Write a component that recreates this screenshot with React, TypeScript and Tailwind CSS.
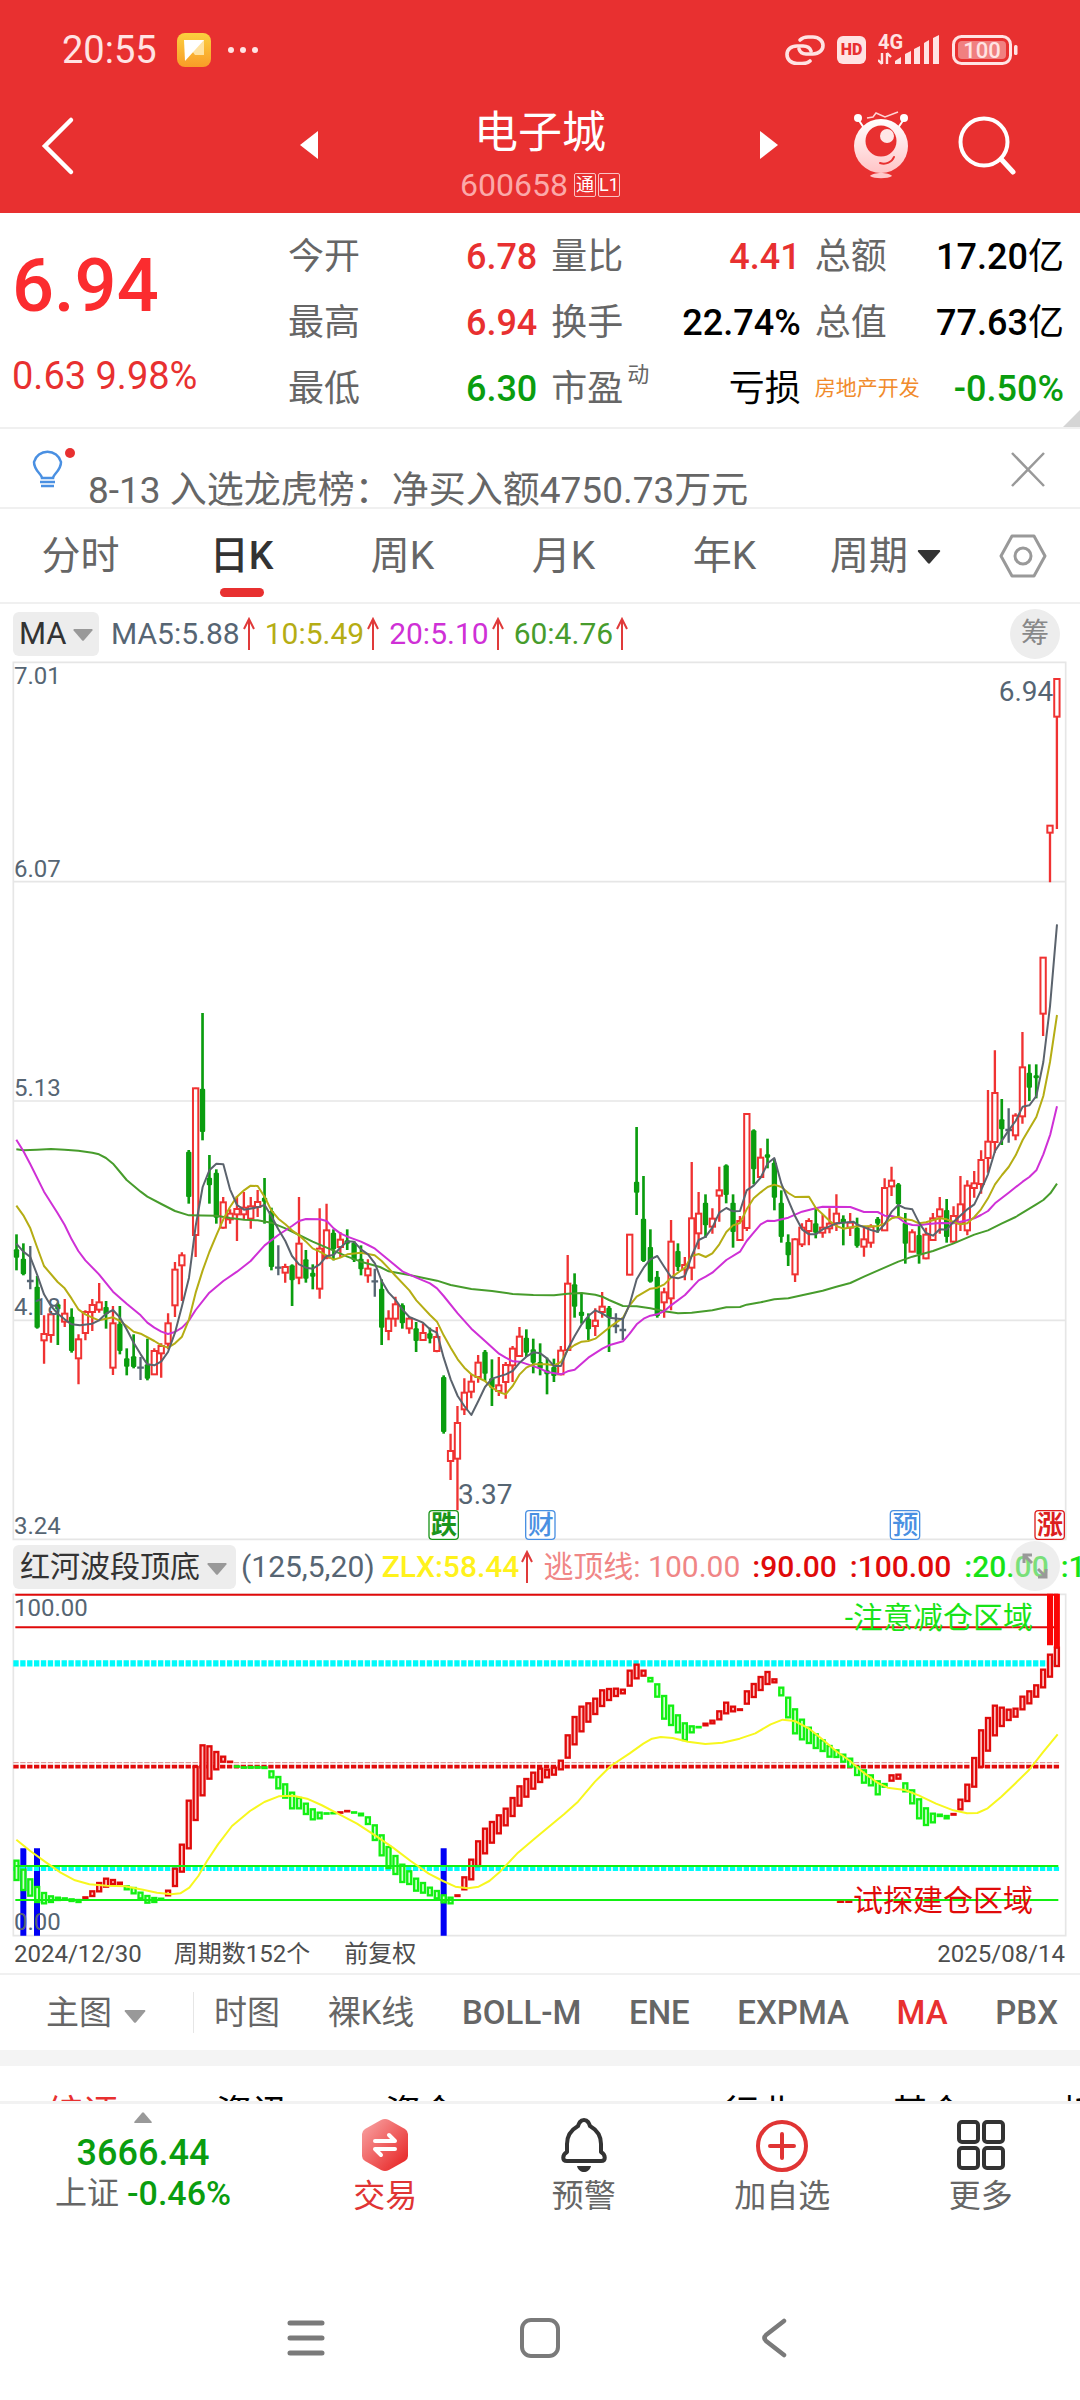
import React from "react";

type Candle = [string, number, number, number, number];
type Bar = [string, number, number];

/* Chart space: 3 units per pixel, one session every 20.67 units. */
const FIRST = 49.5;
const STEP = 20.67;
const xAt = (i: number) => FIRST + STEP * i;

const UP = "#f03232";
const DOWN = "#0a9d0f";
const FLAT = "#566573";

/* kind, high, body top, body bottom, low */
const CANDLES: Candle[] = `
G1720,1765,1790,1828 G1747,1793,1840,1843 N1755,1860,1860,1885 G1845,1877,2000,2003 R1963,2019,2038,2108
R1950,1960,2022,2045 G1925,1930,1945,2052 R1914,1958,1982,1998 G1942,1967,2070,2075 R2020,2035,2092,2170
R1948,1953,2016,2038 R1914,1932,1953,2010 R1866,1924,1946,1955 G1920,1938,1960,2003 R1935,1987,2120,2142
G1935,1988,2070,2080 G2062,2092,2117,2143 G2020,2086,2118,2122 N2088,2120,2120,2157 G2033,2110,2153,2158
R2062,2070,2140,2142 R2047,2055,2077,2150 R1957,1987,2048,2065 R1803,1826,1933,1968 R1774,1783,1813,1920
G1467,1472,1608,1628 R1280,1282,1722,1788 G1056,1283,1413,1438 G1482,1550,1573,1628 G1525,1535,1670,1688
R1608,1624,1700,1703 R1645,1658,1675,1688 R1605,1644,1660,1740 R1593,1640,1660,1675 R1608,1636,1673,1703
R1587,1623,1638,1668 G1551,1610,1622,1688 G1640,1650,1818,1828 N1753,1820,1820,1843 R1808,1818,1835,1865
G1810,1813,1858,1935 R1608,1748,1850,1870 G1767,1795,1853,1865 G1810,1835,1847,1885 R1642,1763,1883,1913
R1628,1708,1790,1795 G1705,1715,1765,1798 R1713,1736,1758,1790 G1705,1738,1748,1767 G1740,1745,1797,1803
G1753,1793,1825,1843 R1795,1823,1843,1865 N1823,1861,1861,1907 G1855,1883,2000,2052 R1948,1973,2010,2038
R1907,1930,1973,1997 G1927,1932,1987,2003 R1968,1973,2002,2018 G1983,2002,2040,2073 R1987,2016,2037,2040
G2000,2017,2033,2047 R1998,2028,2070,2074 G2143,2148,2313,2318 R2318,2370,2400,2457 R2235,2286,2393,2548
R2152,2195,2245,2262 R2138,2162,2192,2212 R2082,2105,2148,2165 G2067,2072,2138,2160 G2095,2152,2180,2235
R2088,2173,2190,2205 R2103,2112,2163,2213 R2055,2063,2113,2163 R1998,2027,2085,2088 G2005,2030,2075,2088
G2033,2065,2105,2137 G2047,2103,2123,2143 G2090,2128,2140,2200 G2093,2118,2145,2163 R2055,2069,2140,2143
R1782,1868,2067,2070 G1837,1870,1937,1970 G1895,1952,1965,1988 G1957,1973,2005,2037 R1942,1979,1995,2025
R1893,1937,1953,1970 G1935,1940,1970,2073 N1957,1995,1995,2017 N1970,2007,2007,2037 R1720,1721,1841,1843
G1398,1562,1595,1662 G1545,1673,1800,1803 G1705,1758,1862,1865 G1830,1847,1965,1970 R1880,1894,1924,1970
R1677,1742,1912,1948 G1747,1770,1818,1830 R1788,1812,1825,1858 R1503,1672,1820,1858 R1593,1658,1717,1765
G1600,1625,1693,1730 R1642,1673,1697,1718 R1517,1588,1604,1682 G1510,1513,1602,1627 G1600,1625,1713,1760
R1665,1680,1737,1740 R1358,1359,1701,1710 G1405,1408,1525,1570 R1462,1490,1548,1550 G1433,1480,1490,1522
G1495,1505,1610,1648 G1588,1625,1728,1745 G1720,1743,1783,1815 R1732,1735,1840,1863 R1687,1700,1750,1758
R1672,1680,1710,1753 G1643,1687,1715,1732 R1660,1700,1715,1730 R1642,1688,1702,1717 R1600,1658,1687,1710
G1663,1673,1687,1753 R1656,1685,1700,1725 G1670,1700,1755,1760 R1700,1735,1757,1787 R1690,1697,1745,1760
G1668,1673,1688,1715 R1552,1581,1708,1710 R1517,1559,1576,1605 G1566,1570,1630,1665 G1656,1686,1748,1808
R1705,1714,1772,1774 G1695,1722,1780,1808 R1700,1721,1792,1795 R1656,1672,1737,1740 R1608,1645,1667,1718
G1614,1647,1728,1745 R1636,1665,1742,1745 R1545,1630,1687,1710 R1558,1574,1708,1723 R1530,1567,1581,1610
R1468,1497,1569,1598 R1287,1442,1491,1535 R1168,1296,1443,1475 G1314,1375,1405,1452 N1342,1407,1407,1445
R1357,1364,1423,1438 R1113,1219,1366,1388 G1210,1235,1280,1320 G1210,1243,1252,1312 R889,890,1058,1125
R493,494,515,664 R53,54,167,504`
  .trim()
  .split(/\s+/)
  .map((s) => [s[0], ...s.slice(1).split(",").map(Number)] as Candle);

const MA5 =
  "49,1748 70,1772 91,1788 111,1840 132,1900 153,1935 173,1958 194,1975 215,1990 240,1993 277,1988 297,1978 318,1958 339,1947 360,1970 380,2005 401,2045 422,2080 442,2110 463,2113 484,2101 504,2073 525,2015 546,1935 567,1850 587,1695 608,1578 628,1528 649,1508 670,1510 690,1585 711,1632 732,1646 773,1639 794,1632 814,1665 835,1705 856,1740 876,1785 897,1810 918,1820 938,1823 959,1810 980,1785 1001,1782 1021,1760 1042,1741 1062,1742 1083,1765 1104,1780 1125,1808 1145,1860 1166,1895 1187,1917 1207,1945 1228,1968 1269,1985 1290,2005 1311,2015 1331,2090 1352,2155 1373,2205 1393,2235 1414,2262 1435,2220 1455,2178 1476,2153 1517,2140 1538,2130 1559,2105 1579,2087 1600,2074 1621,2077 1641,2092 1662,2115 1683,2115 1703,2065 1724,2025 1745,1990 1765,1965 1786,1948 1807,1958 1827,1970 1869,1975 1889,1930 1910,1855 1931,1820 1951,1795 1972,1785 1993,1818 2013,1848 2034,1852 2055,1845 2075,1785 2096,1737 2117,1727 2137,1700 2158,1655 2179,1641 2199,1651 2220,1650 2240,1588 2261,1574 2282,1550 2303,1507 2323,1491 2344,1568 2365,1618 2385,1665 2406,1705 2427,1720 2447,1720 2468,1705 2509,1687 2530,1685 2560,1682 2571,1690 2613,1707 2633,1712 2654,1690 2675,1652 2695,1632 2716,1642 2737,1645 2757,1685 2778,1716 2799,1724 2819,1705 2840,1706 2861,1682 2902,1645 2923,1630 2943,1588 2964,1540 2985,1470 3006,1438 3026,1408 3047,1380 3068,1337 3088,1333 3109,1305 3130,1203 3150,1036 3171,790";
const MA10 =
  "49,1634 70,1663 91,1702 111,1758 132,1815 173,1863 194,1882 215,1913 235,1945 256,1960 277,1970 297,1978 339,1969 360,1980 380,1995 401,2012 422,2018 463,2040 484,2053 504,2060 525,2047 546,2027 567,1975 587,1895 608,1828 628,1773 649,1723 670,1675 690,1638 711,1607 732,1588 752,1574 773,1575 794,1608 814,1648 835,1673 856,1690 876,1708 897,1723 918,1742 938,1762 959,1772 1001,1796 1021,1790 1042,1780 1083,1775 1124,1783 1145,1800 1166,1822 1187,1845 1228,1888 1249,1918 1290,1962 1311,1982 1331,2023 1352,2060 1373,2095 1393,2120 1414,2140 1455,2160 1476,2180 1497,2193 1517,2200 1538,2175 1559,2140 1579,2120 1600,2110 1641,2110 1662,2113 1683,2103 1703,2067 1724,2052 1745,2042 1765,2040 1786,2033 1827,2000 1869,1970 1889,1933 1910,1907 1951,1883 1972,1880 1993,1870 2013,1850 2055,1820 2075,1785 2096,1779 2117,1788 2137,1777 2158,1750 2179,1713 2199,1693 2220,1686 2240,1645 2261,1612 2282,1594 2303,1578 2323,1571 2344,1578 2365,1596 2385,1608 2427,1607 2447,1640 2468,1660 2489,1680 2509,1695 2530,1703 2571,1696 2633,1696 2654,1687 2675,1672 2695,1667 2716,1675 2737,1678 2757,1687 2778,1684 2819,1672 2840,1675 2861,1683 2881,1690 2902,1687 2923,1668 2943,1645 2964,1612 2985,1570 3006,1542 3026,1518 3047,1483 3068,1437 3088,1403 3109,1368 3130,1305 3150,1203 3171,1062";
const MA20 =
  "49,1436 70,1470 91,1510 132,1592 173,1657 194,1692 215,1735 235,1770 256,1798 297,1840 339,1892 380,1928 422,1963 442,1985 463,2000 484,2012 504,2019 525,2013 546,2000 567,1978 587,1947 628,1895 670,1860 711,1832 752,1800 794,1753 835,1722 876,1695 897,1680 918,1674 960,1675 980,1680 1001,1702 1021,1717 1042,1727 1083,1742 1104,1752 1125,1763 1166,1797 1207,1831 1249,1850 1290,1867 1311,1882 1331,1905 1373,1957 1414,2003 1455,2040 1497,2078 1517,2090 1538,2101 1559,2102 1621,2123 1641,2133 1683,2140 1703,2131 1724,2126 1765,2090 1807,2063 1827,2053 1869,2041 1889,2018 1910,1990 1931,1973 1951,1964 1972,1960 1993,1950 2013,1933 2055,1902 2096,1858 2117,1847 2137,1835 2179,1797 2220,1772 2240,1740 2261,1715 2282,1690 2303,1679 2323,1680 2365,1670 2406,1652 2447,1642 2468,1637 2551,1638 2592,1653 2633,1653 2654,1664 2675,1665 2695,1670 2716,1686 2737,1692 2757,1693 2778,1690 2819,1686 2861,1687 2902,1678 2923,1672 2943,1662 2964,1650 2985,1627 3026,1595 3068,1562 3088,1548 3109,1528 3130,1480 3151,1420 3171,1336";
const MA60 =
  "49,1465 70,1468 111,1466 153,1464 194,1466 235,1469 277,1475 297,1480 318,1491 339,1508 360,1533 380,1557 422,1592 442,1607 484,1629 525,1650 567,1663 649,1664 690,1671 732,1676 773,1678 814,1685 856,1702 897,1722 938,1742 980,1760 1042,1787 1083,1802 1140,1818 1166,1831 1228,1842 1311,1859 1352,1872 1414,1884 1476,1890 1538,1899 1600,1902 1662,1903 1703,1898 1745,1896 1786,1901 1807,1907 1827,1917 1869,1935 1910,1936 1951,1942 1993,1951 2034,1957 2075,1955 2137,1948 2179,1939 2220,1938 2240,1931 2282,1924 2323,1915 2365,1912 2406,1903 2468,1889 2509,1877 2551,1866 2592,1847 2633,1829 2695,1802 2737,1787 2799,1770 2861,1747 2923,1721 2964,1708 3006,1687 3047,1668 3109,1630 3130,1617 3151,1597 3171,1568";

const BARS: Bar[] = `
G1076,1140 G1103,1170 G1132,1187 G1155,1206 G1173,1210 G1183,1206 G1187,1200 G1189,1194 G1192,1203 G1194,1206
R1186,1195 R1168,1188 R1143,1174 R1130,1160 R1134,1152 R1142,1152 G1153,1168 G1158,1180 G1172,1195 G1182,1208
G1188,1206 G1190,1198 R1166,1186 R1100,1158 R1028,1115 R896,1045 R795,960 R730,886 R733,836 R750,808
R764,785 R779,786 G793,796 G796,802 G795,803 G795,803 G796,804 G808,832 G825,865 G847,893
G872,925 G888,925 G905,942 G922,958 G932,955 G934,938 G933,936 R931,936 R927,934 G931,935
G935,946 G946,972 G970,1020 G1000,1066 G1035,1104 G1062,1122 G1088,1146 G1108,1152 G1130,1172 G1143,1178
G1157,1186 G1167,1195 G1180,1207 G1187,1210 R1180,1188 R1126,1168 R1073,1138 R1018,1098 R980,1060 R960,1028
R940,1000 R920,976 R888,948 R853,917 R831,890 R812,866 R800,846 R803,832 R797,824 R776,808
R700,773 R645,733 R614,694 R604,665 R590,642 R565,618 R561,600 R560,588 R563,580 R506,557
R488,535 R506,527 G528,544 G547,590 G582,656 G611,675 G640,697 G664,720 G673,697 G675,679
R665,676 R656,670 R628,658 R602,640 R614,634 R622,630 R568,611 R546,591 R525,570 R510,552
R532,547 G557,586 G587,652 G622,700 G653,718 G677,729 G697,744 G715,753 G732,770 G745,771
G758,785 G770,800 G795,825 G805,848 G820,856 G838,883 G846,860 R820,842 R818,836 G844,874
G865,910 G892,955 G919,975 G935,967 G938,948 G942,955 R936,944 R893,928 R848,903 R768,860
R685,800 R648,752 R611,706 R617,678 R623,660 R620,650 R584,628 R568,610 R550,590 R503,562
R458,530 R437,498`
  .trim()
  .split(/\s+/)
  .map((s) => [s[0], ...s.slice(1).split(",").map(Number)] as Bar);

const ZLX =
  "49,1016 91,1050 139,1085 182,1115 225,1138 268,1150 321,1154 375,1156 429,1166 471,1175 514,1180 541,1177 568,1160 595,1125 621,1080 654,1030 696,975 750,930 793,903 836,886 879,884 921,893 964,912 1018,940 1071,968 1125,1003 1179,1040 1232,1080 1286,1118 1329,1140 1366,1157 1404,1162 1436,1157 1468,1140 1500,1112 1554,1055 1607,1010 1692,940 1734,902 1785,842 1832,795 1889,757 1930,728 1956,713 1982,708 2018,711 2064,722 2116,729 2167,725 2219,713 2266,697 2312,670 2348,656 2384,660 2426,682 2467,715 2508,750 2550,780 2591,815 2632,845 2663,860 2715,867 2756,883 2808,908 2860,928 2901,937 2932,936 2963,922 3004,887 3045,848 3087,807 3128,755 3173,700";

function Caret({ className = "" }: { className?: string }) {
  return (
    <svg viewBox="0 0 20 12" className={`pointer-events-none shrink-0 ${className}`} fill="currentColor" aria-hidden="true">
      <path d="M1 0h18q1 .6 .4 1.4L11 11.2q-1 1-2 0L.6 1.4Q0 .6 1 0z" />
    </svg>
  );
}

function UpArrow() {
  return (
    <svg viewBox="0 0 12 34" className="h-[34px] w-3 shrink-0" fill="none" stroke="#e03a3a" strokeWidth="2" aria-hidden="true">
      <path d="M6 33V2M1 12L6 2l5 10" />
    </svg>
  );
}

function Pick({ label, value, className = "" }: { label: string; value: string; className?: string }) {
  return (
    <select aria-label={label} className={`appearance-none bg-transparent outline-none ${className}`}>
      <option>{value}</option>
    </select>
  );
}

function StatusBar() {
  return (
    <div className="flex h-[100px] items-center justify-between pl-[62px] pr-[62px] text-[#ffe3e3]">
      <div className="flex items-center">
        <span className="text-[38px] leading-[44px]">20:55</span>
        <svg viewBox="0 0 34 34" className="ml-[20px] h-[34px] w-[34px]" aria-hidden="true">
          <defs>
            <linearGradient id="note" x1="0" y1="0" x2="0" y2="1">
              <stop offset="0" stopColor="#fbd03f" />
              <stop offset="1" stopColor="#f99c28" />
            </linearGradient>
          </defs>
          <rect width="34" height="34" rx="8" fill="url(#note)" />
          <path d="M7 7h20v15H18z" fill="#ffe2a0" />
          <path d="M7 7h20L8 28z" fill="#fff" />
        </svg>
        <svg viewBox="0 0 32 8" className="ml-[16px] h-2 w-8" fill="currentColor" aria-hidden="true">
          <circle cx="4" cy="4" r="3" />
          <circle cx="16" cy="4" r="3" />
          <circle cx="28" cy="4" r="3" />
        </svg>
      </div>
      <div className="flex items-center">
        <svg viewBox="0 0 40 30" className="h-[30px] w-10" fill="none" stroke="currentColor" strokeWidth="3.6" strokeLinecap="round" aria-hidden="true">
          <path d="M15 5C17 3 19 2 23 2h5c6 0 10 4 10 8.500S34 19 28 19h-7c-4 0-6-2-7-5" />
          <path d="M25 26c-2 2-4 2.500-8 2.500h-5c-6 0-10-4-10-9S6 11 12 11h6c4 0 7 2 8 5" />
        </svg>
        <span className="ml-3 flex h-7 w-[29px] items-center justify-center rounded-[6px] bg-[#ffe3e3] text-[16px] font-black leading-5 text-[#e83030]">HD</span>
        <svg viewBox="0 0 62 38" className="ml-3 h-[38px] w-[62px]" fill="currentColor" aria-hidden="true">
          <text x="0" y="18" fontSize="20" fontWeight="700">4G</text>
          <path d="M4 22v11M4 33L0 29M9 33V22M9 22l4 4" stroke="currentColor" strokeWidth="2.400" fill="none" />
          <path d="M17 33v-3l6-4v7zM27 33V23l6-3v13zM36 33V18l6-3v18zM46 33V12l5-3v24zM55 33V7l6-3v29z" />
        </svg>
        <svg viewBox="0 0 66 30" className="ml-3 h-[30px] w-[66px]" fill="none" aria-hidden="true">
          <rect x="1.500" y="1.500" width="57" height="27" rx="8" stroke="currentColor" strokeWidth="3" />
          <rect x="6" y="6" width="48" height="18" rx="4" fill="#f08080" />
          <text x="30" y="23" textAnchor="middle" fontSize="22" fontWeight="500" fill="currentColor">100</text>
          <rect x="62" y="10" width="3.500" height="10" rx="1.500" fill="currentColor" />
        </svg>
      </div>
    </div>
  );
}

function TitleBar() {
  return (
    <div className="grid h-[113px] grid-cols-[1fr_480px_1fr] text-white">
      <div className="flex items-start pl-[40px] pt-[16px]">
        <button aria-label="返回">
          <svg viewBox="0 0 36 60" className="h-[60px] w-9" fill="none" stroke="currentColor" strokeWidth="4.500" strokeLinecap="round" aria-hidden="true">
            <path d="M31 4L5 30l26 26" />
          </svg>
        </button>
      </div>
      <div className="flex items-start justify-between">
        <button aria-label="上一只" className="mt-[31px]">
          <svg viewBox="0 0 20 28" className="h-7 w-5" fill="currentColor" aria-hidden="true"><path d="M18 0v28L0 14z" /></svg>
        </button>
        <div className="flex flex-col items-center pt-[10px]">
          <h1 className="text-[44px] leading-[46px]">电子城</h1>
          <p className="mt-[12px] flex items-center gap-[2px] text-[32px] leading-[34px] text-[#fba9a9]">
            <span className="mr-1">600658</span>
            <span className="flex h-6 w-[22px] items-center justify-center rounded-[2px] border border-[#fbc4c4] text-[18px] leading-[22px] text-white">通</span>
            <span className="flex h-6 w-[22px] items-center justify-center rounded-[2px] border border-[#fbc4c4] text-[18px] leading-[22px] text-white">L1</span>
          </p>
        </div>
        <button aria-label="下一只" className="mt-[31px]">
          <svg viewBox="0 0 20 28" className="h-7 w-5" fill="currentColor" aria-hidden="true"><path d="M0 0v28l18-14z" /></svg>
        </button>
      </div>
      <div className="flex items-start justify-end gap-[49px] pr-[64px] pt-[10px]">
        <button aria-label="智能助手">
          <svg viewBox="0 0 56 70" className="h-[70px] w-14" fill="none" aria-hidden="true">
            <defs>
              <linearGradient id="body" x1="0" y1="0" x2="0" y2="1">
                <stop offset="0" stopColor="#fff" />
                <stop offset="1" stopColor="#ffc4c6" />
              </linearGradient>
            </defs>
            <path d="M14 8l6-1 3-4 9 4 13-5" stroke="#ffd5d5" strokeWidth="1.500" />
            <path d="M5 9l6 9M51 9l-6 9" stroke="#fff" strokeWidth="2" />
            <circle cx="5" cy="8" r="4" fill="#fff" />
            <circle cx="51" cy="8" r="4" fill="#fff" />
            <circle cx="28" cy="36" r="27" fill="url(#body)" />
            <circle cx="28" cy="31" r="15.500" fill="#e83030" />
            <circle cx="34" cy="26" r="7" fill="#ffe6e6" />
            <path d="M27 53c6 2 12-1 14-6" stroke="#e83030" strokeWidth="2" strokeLinecap="round" />
            <path d="M17 66c3-4 19-4 22 0-4 3-18 3-22 0z" fill="#ffc9cb" />
          </svg>
        </button>
        <button aria-label="搜索" className="pt-[6px]">
          <svg viewBox="0 0 58 60" className="h-[60px] w-[58px]" fill="none" stroke="currentColor" strokeWidth="4" strokeLinecap="round" aria-hidden="true">
            <circle cx="26" cy="26" r="23.500" />
            <path d="M43 43l12 13" strokeWidth="5" />
          </svg>
        </button>
      </div>
    </div>
  );
}

const QUOTES: { label: React.ReactNode; value: string; unit?: string; tone: string; small?: boolean }[] = [
  { label: "今开", value: "6.78", tone: "text-[#e83030]" },
  { label: "量比", value: "4.41", tone: "text-[#e83030]" },
  { label: "总额", value: "17.20", unit: "亿", tone: "text-black" },
  { label: "最高", value: "6.94", tone: "text-[#e83030]" },
  { label: "换手", value: "22.74%", tone: "text-black" },
  { label: "总值", value: "77.63", unit: "亿", tone: "text-black" },
  { label: "最低", value: "6.30", tone: "text-[#0a9d0f]" },
  {
    label: (
      <span className="flex">
        市盈<sup className="-top-3 ml-1 text-[22px] leading-[36px]">动</sup>
      </span>
    ),
    value: "",
    unit: "亏损",
    tone: "text-black",
  },
  { label: "房地产开发", value: "-0.50%", tone: "text-[#0a9d0f]", small: true },
];

function QuotePanel() {
  return (
    <section className="relative flex border-b-2 border-[#f0f0f0] pb-[5px] pt-[11px]">
      <div className="w-[288px] shrink-0 pl-[12px]">
        <p className="mt-[24px] text-[74px] font-medium leading-[76px] text-[#fb2c2f]">6.94</p>
        <p className="mt-[32px] text-[38px] leading-[40px] text-[#e83030]">0.63 9.98%</p>
      </div>
      <dl className="grid flex-1 grid-cols-3 gap-x-[14px] pr-[16px]">
        {QUOTES.map((q, i) => (
          <div key={i} className="flex h-[66px] items-center justify-between">
            <dt className={q.small ? "text-[21px] text-[#f18b2c]" : "text-[36px] leading-[40px] text-[#666]"}>{q.label}</dt>
            <dd className={`text-[36px] font-medium leading-[40px] ${q.tone}`}>
              {q.value}
              {q.unit && <span className="font-normal">{q.unit}</span>}
            </dd>
          </div>
        ))}
      </dl>
      <svg viewBox="0 0 17 17" className="absolute bottom-0 right-0 h-[17px] w-[17px]" fill="#d5d5d5" aria-hidden="true"><path d="M17 0v17H0z" /></svg>
    </section>
  );
}

function NewsStrip() {
  return (
    <section className="flex h-[80px] items-start border-b-2 border-[#f0f0f0] pl-[30px] pr-[34px]">
      <svg viewBox="0 0 48 44" className="mt-[18px] h-11 w-12 shrink-0" fill="none" stroke="#4a90e2" strokeWidth="2.500" aria-hidden="true">
        <path d="M12 31c0-4-8-7-8-16a14 14 0 0 1 27 0c0 9-8 12-8 16zM10 35h15M11 39h13" />
        <circle cx="40" cy="6" r="5" fill="#e83030" stroke="none" />
      </svg>
      <a href="#news" className="ml-[10px] mt-[40px] flex-1 whitespace-nowrap text-[37px] leading-[44px] text-[#666]">
        8-13 入选龙虎榜：净买入额4750.73万元
      </a>
      <button aria-label="关闭" className="mt-[21px]">
        <svg viewBox="0 0 36 38" className="h-[38px] w-9" fill="none" stroke="#999" strokeWidth="2.500" aria-hidden="true">
          <path d="M2 3l32 33M34 3L2 36" />
        </svg>
      </button>
    </section>
  );
}

function PeriodTabs() {
  const tabs = ["分时", "日K", "周K", "月K", "年K"];
  return (
    <nav className="flex h-[95px] items-stretch border-b-2 border-[#f0f0f0] text-[39px] text-[#666]">
      {tabs.map((t) => (
        <button key={t} className={`relative flex-1 pt-[2px] ${t === "日K" ? "font-medium text-[#333]" : ""}`}>
          {t}
          {t === "日K" && <span className="absolute bottom-[5px] left-1/2 h-[9px] w-11 -translate-x-1/2 rounded-full bg-[#e83030]" />}
        </button>
      ))}
      <div className="flex flex-1 items-center justify-center gap-2 pt-[2px]">
        <Pick label="周期" value="周期" />
        <Caret className="h-[14px] w-6 text-[#333]" />
      </div>
      <button aria-label="设置" className="flex w-[114px] items-center justify-center">
        <svg viewBox="0 0 48 44" className="h-11 w-12" fill="none" stroke="#999" strokeWidth="3" strokeLinejoin="round" aria-hidden="true">
          <path d="M13 2h22l11 20-11 20H13L2 22z" />
          <circle cx="24" cy="22" r="8" />
        </svg>
      </button>
    </nav>
  );
}

function MaLegend() {
  const items: [string, string][] = [
    ["MA5:5.88", "text-[#566573]"],
    ["10:5.49", "text-[#b5ad14]"],
    ["20:5.10", "text-[#cf30d6]"],
    ["60:4.76", "text-[#479c2c]"],
  ];
  return (
    <div className="flex h-[57px] items-center pl-[13px] pr-[20px] pt-[2px]">
      <div className="mr-3 flex h-11 items-center gap-[6px] rounded-[6px] bg-[#ededed] px-[6px]">
        <Pick label="均线指标" value="MA" className="text-[31px] leading-[40px] text-[#333]" />
        <Caret className="mt-[3px] h-3 w-5 text-[#999]" />
      </div>
      <ul className="flex flex-1 gap-[10px] text-[30px] leading-[34px]">
        {items.map(([t, c]) => (
          <li key={t} className={`flex items-center gap-[3px] ${c}`}>
            {t}
            <UpArrow />
          </li>
        ))}
      </ul>
      <button className="flex h-[50px] w-[50px] items-center justify-center rounded-full bg-[#ededed] text-[28px] text-[#888]">筹</button>
    </div>
  );
}

function Marker({ x, text, color, bold }: { x: number; text: string; color: string; bold?: boolean }) {
  return (
    <g>
      <rect x={x} y="2549" width="88" height="86" rx="10" fill="#fff" stroke={color} strokeWidth="4" />
      <text x={x + 45} y="2619" textAnchor="middle" fontSize="78" fontWeight={bold ? 700 : 500} fill={color}>
        {text}
      </text>
    </g>
  );
}

function PriceChart() {
  const lines: [string, string][] = [
    [MA60, "#479c2c"],
    [MA20, "#cf30d6"],
    [MA10, "#b5ad14"],
    [MA5, "#5b636d"],
  ];
  return (
    <svg viewBox="0 0 3240 2640" className="block w-full" role="img" aria-label="日K线图">
      <path d="M40 4H3197V2635H40zM40 662H3197M40 1320H3197M40 1978H3197" fill="none" stroke="#e6e6e6" strokeWidth="5" />
      {CANDLES.map(([k, hi, top, bot, lo], i) => {
        const x = xAt(i);
        if (k === "N") return <path key={i} d={`M${x} ${hi}V${lo}M${x - 10} ${top}h20`} stroke={FLAT} strokeWidth="7" />;
        if (k === "G")
          return (
            <g key={i}>
              <path d={`M${x} ${hi}V${lo}`} stroke={DOWN} strokeWidth="8" />
              <rect x={x - 8} y={top} width="16" height={bot - top} rx="3" fill={DOWN} />
            </g>
          );
        return (
          <g key={i} stroke={UP} fill="none">
            <path d={`M${x} ${hi}V${top}M${x} ${bot}V${lo}`} strokeWidth="7" />
            <rect x={x - 8} y={top} width="16" height={bot - top} strokeWidth="6" />
          </g>
        );
      })}
      {lines.map(([p, c]) => (
        <polyline key={c} points={p} fill="none" stroke={c} strokeWidth="6" strokeLinejoin="round" />
      ))}
      <g fill={FLAT} fontSize="72">
        <text x="42" y="69">7.01</text>
        <text x="42" y="648">6.07</text>
        <text x="42" y="1305">5.13</text>
        <text x="42" y="1963">4.18</text>
        <text x="42" y="2618">3.24</text>
      </g>
      <g fill={FLAT} fontSize="84">
        <text x="1374" y="2530">3.37</text>
        <text x="3160" y="121" textAnchor="end">6.94</text>
      </g>
      <Marker x={1287} text="跌" color="#1b951b" bold />
      <Marker x={1577} text="财" color="#4a90e2" />
      <Marker x={2671} text="预" color="#4a90e2" />
      <Marker x={3105} text="涨" color="#dc1e1e" bold />
    </svg>
  );
}

function IndicatorLegend() {
  return (
    <div className="relative flex h-[50px] items-center overflow-hidden whitespace-nowrap pl-[13px] pt-[2px] text-[30px] leading-[34px]">
      <div className="mr-[5px] flex h-11 shrink-0 items-center gap-[7px] rounded-[6px] bg-[#ededed] pl-[7px] pr-[9px]">
        <Pick label="副图指标" value="红河波段顶底" className="text-[30px] leading-[40px] text-[#333]" />
        <Caret className="mt-[3px] h-3 w-5 text-[#999]" />
      </div>
      <span className="mr-[7px] text-[#566573]">(125,5,20)</span>
      <span className="flex items-center gap-[2px] font-medium text-[#fff21c]">
        ZLX:58.44
        <UpArrow />
      </span>
      <span className="ml-[10px] text-[#f08686]">逃顶线: 100.00</span>
      <span className="ml-[12px] font-medium text-[#e00a0a]">:90.00</span>
      <span className="ml-[13px] font-medium text-[#e00a0a]">:100.00</span>
      <span className="ml-[13px] font-medium text-[#17e317]">:20.00</span>
      <span className="ml-[12px] font-medium text-[#17e317]">:1</span>
      <button aria-label="放大" className="absolute right-[20px] top-0 flex h-[50px] w-[50px] items-center justify-center rounded-full bg-[#dddddd]/50">
        <svg viewBox="0 0 26 26" className="h-[26px] w-[26px]" fill="none" stroke="#999" strokeWidth="3" aria-hidden="true">
          <path d="M2 10V2h8M2 2l8 8M24 16v8h-8M24 24l-8-8" />
        </svg>
      </button>
    </div>
  );
}

function IndicatorChart() {
  return (
    <svg viewBox="0 270 3240 1050" className="block w-full" role="img" aria-label="红河波段顶底">
      <path d="M40 280H3197V1304H40z" fill="none" stroke="#e6e6e6" strokeWidth="5" />
      <path d="M70 1042v262M111 1042v262M1331 1042v262" stroke="#0000f5" strokeWidth="18" />
      <path d="M46 281H3175M46 379H3175" stroke="#e00a0a" strokeWidth="6" />
      <path d="M40 487H3180" stroke="#00fafa" strokeWidth="19" strokeDasharray="16 4.670" />
      <path d="M40 785H3180" stroke="#d98a8a" strokeWidth="3" strokeDasharray="16 4.670" />
      <path d="M40 797H3180" stroke="#e00a0a" strokeWidth="11" strokeDasharray="16 4.670" />
      <path d="M40 1104H3180" stroke="#00fafa" strokeWidth="12" strokeDasharray="16 4.670" />
      {BARS.map(([k, top, bot], i) => (
        <rect
          key={i}
          x={xAt(i) - 6}
          y={top + 3}
          width="12"
          height={Math.max(bot - top - 6, 1)}
          fill={k === "R" ? "#ffc8c8" : "#d4ffd4"}
          stroke={k === "R" ? "#e00a0a" : "#12f012"}
          strokeWidth="7"
        />
      ))}
      <path d={`M${xAt(150)} 278V433M${xAt(151)} 278V440`} stroke="#fa0505" strokeWidth="18" />
      <path d="M46 1095H3175M46 1197H3175" stroke="#12f012" strokeWidth="6" />
      <polyline points={ZLX} fill="none" stroke="#f7f71e" strokeWidth="6" strokeLinejoin="round" />
      <g fontSize="72" fill={FLAT}>
        <text x="42" y="345">100.00</text>
        <text x="42" y="1288">0.00</text>
      </g>
      <g fontSize="90" textAnchor="end">
        <text x="3099" y="381" fill="#17e317">-注意减仓区域</text>
        <text x="3099" y="1230" fill="#e00a0a">--试探建仓区域</text>
      </g>
    </svg>
  );
}

function OverlayTabs() {
  const tabs = ["裸K线", "BOLL-M", "ENE", "EXPMA", "MA", "PBX"];
  return (
    <nav className="flex h-[75px] items-center whitespace-nowrap text-[33px] text-[#666]">
      <div className="flex h-[41px] w-[194px] shrink-0 items-center gap-3 border-r border-[#e6e6e6] pl-[46px]">
        <Pick label="主图指标" value="主图" />
        <Caret className="mt-[8px] h-[13px] w-[22px] text-[#999]" />
      </div>
      <div className="flex flex-1 items-center justify-between pl-[20px] pr-[22px] font-medium">
        <button className="font-normal">时图</button>
        {tabs.map((t) => (
          <button key={t} className={t === "MA" ? "text-[#e83030]" : t === "裸K线" ? "font-normal" : ""}>
            {t}
          </button>
        ))}
      </div>
    </nav>
  );
}

function InfoTabs() {
  const tabs = ["综评", "资讯", "资金", "", "行业", "基金", "板块"];
  return (
    <div className="h-[51px] overflow-hidden border-t-[16px] border-[#f4f4f4]">
      <div className="flex pl-[47px] pt-[29px] text-[36px] leading-[38px]">
        {tabs.map((t, i) =>
          t ? (
            <button key={i} className={`w-[169px] shrink-0 text-left ${i === 0 ? "text-[#e83030]" : "text-black"}`}>
              {t}
            </button>
          ) : (
            <span key={i} className="w-[169px] shrink-0" />
          )
        )}
      </div>
    </div>
  );
}

function ActionBar() {
  return (
    <div className="flex h-[174px] border-t-[3px] border-[#f2f2f2] text-[32px] text-[#666]">
      <button className="flex w-[286px] flex-col items-center pt-[8px]">
        <Caret className="h-[11px] w-5 rotate-180 text-[#999]" />
        <span className="mt-[10px] text-[36px] font-medium leading-[40px] text-[#0a9d0f]">3666.44</span>
        <span className="flex items-center gap-2 leading-[40px]">
          上证<span className="text-[34px] font-medium text-[#0a9d0f]">-0.46%</span>
        </span>
      </button>
      <button className="flex flex-1 flex-col items-center pt-[14px] text-[#e03434]">
        <svg viewBox="0 0 48 54" className="h-[54px] w-12" aria-hidden="true">
          <defs>
            <linearGradient id="trade" x1="0" y1="0" x2="1" y2="1">
              <stop offset="0.100" stopColor="#f79a9a" />
              <stop offset="0.900" stopColor="#e82a2a" />
            </linearGradient>
          </defs>
          <path d="M20 2q4-2 8 0l16 9q3 2 3 5v22q0 3-3 5l-16 9q-4 2-8 0L4 43q-3-2-3-5V16q0-3 3-5z" fill="url(#trade)" />
          <path d="M14 23h20l-6-6M34 31H14l6 6" fill="none" stroke="#fff" strokeWidth="4" strokeLinecap="round" strokeLinejoin="round" />
        </svg>
        <span className="leading-[48px]">交易</span>
      </button>
      <button className="flex flex-1 flex-col items-center pt-[14px]">
        <svg viewBox="0 0 46 54" className="h-[54px] w-[46px]" fill="none" stroke="#333" strokeWidth="4" strokeLinejoin="round" aria-hidden="true">
          <path d="M23 2c4 0 5 3 6 6 7 4 11 10 11 18v8c5 3 5 9 0 9H6c-5 0-5-6 0-9v-8C6 18 10 12 17 8c1-3 2-6 6-6z" />
          <path d="M16 48h14c-1 4-4 6-7 6s-6-2-7-6z" fill="#333" stroke="none" />
        </svg>
        <span className="leading-[48px]">预警</span>
      </button>
      <button className="flex flex-1 flex-col items-center pt-[14px]">
        <svg viewBox="0 0 54 54" className="h-[54px] w-[54px]" fill="none" stroke="#e03434" strokeWidth="4" strokeLinecap="round" aria-hidden="true">
          <circle cx="27" cy="28" r="24" />
          <path d="M27 16v24M15 28h24" />
        </svg>
        <span className="leading-[48px]">加自选</span>
      </button>
      <button className="flex flex-1 flex-col items-center pt-[14px]">
        <svg viewBox="0 0 50 54" className="h-[54px] w-[50px]" fill="none" stroke="#333" strokeWidth="4" aria-hidden="true">
          <rect x="3" y="4" width="19" height="20" rx="3" />
          <rect x="28" y="4" width="19" height="20" rx="3" />
          <rect x="3" y="30" width="19" height="20" rx="3" />
          <rect x="28" y="30" width="19" height="20" rx="3" />
        </svg>
        <span className="leading-[48px]">更多</span>
      </button>
    </div>
  );
}

function SystemNav() {
  return (
    <nav className="mx-auto grid h-[126px] w-[65%] grid-cols-3 place-items-center text-[#7a7a7a]">
      <button aria-label="最近任务">
        <svg viewBox="0 0 40 40" className="h-10 w-10" stroke="currentColor" strokeWidth="5" strokeLinecap="round" aria-hidden="true">
          <path d="M4 5h32M4 20h32M4 35h32" />
        </svg>
      </button>
      <button aria-label="主屏幕">
        <svg viewBox="0 0 40 40" className="h-10 w-10" fill="none" stroke="currentColor" strokeWidth="4" aria-hidden="true">
          <rect x="2" y="2" width="36" height="36" rx="9" />
        </svg>
      </button>
      <button aria-label="后退">
        <svg viewBox="0 0 26 40" className="h-10 w-[26px]" fill="none" stroke="currentColor" strokeWidth="4.500" strokeLinecap="round" strokeLinejoin="round" aria-hidden="true">
          <path d="M23 3L5 17q-3 3 0 6l18 14" />
        </svg>
      </button>
    </nav>
  );
}

export default function App() {
  return (
    <div className="w-full overflow-hidden bg-white font-['Roboto','Noto_Sans_CJK_SC',sans-serif]">
      <header className="bg-[#e83030]">
        <StatusBar />
        <TitleBar />
      </header>
      <main>
        <QuotePanel />
        <NewsStrip />
        <PeriodTabs />
        <MaLegend />
        <PriceChart />
        <IndicatorLegend />
        <IndicatorChart />
        <div className="flex h-[34px] items-start border-b-2 border-[#f0f0f0] pl-[14px] pr-[15px] text-[24px] leading-[26px] text-[#4d4d4d]">
          <span>2024/12/30</span>
          <span className="ml-[32px]">周期数152个</span>
          <span className="ml-[34px] flex-1">前复权</span>
          <span>2025/08/14</span>
        </div>
        <OverlayTabs />
        <InfoTabs />
      </main>
      <footer>
        <ActionBar />
        <SystemNav />
      </footer>
    </div>
  );
}
